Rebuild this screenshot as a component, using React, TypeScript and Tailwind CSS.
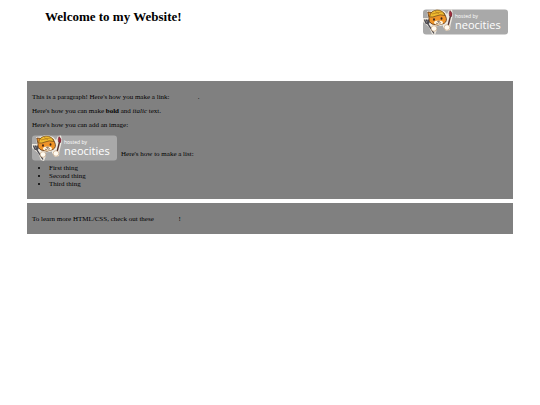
import React from "react";

type BadgeProps = {
  className?: string;
};

const items: string[] = ["First thing", "Second thing", "Third thing"];

const NeocitiesBadge = ({ className = "" }: BadgeProps) => (
  <svg
    viewBox="0 0 85 26"
    role="img"
    aria-label="Hosted by Neocities"
    className={`h-[26px] w-[85px] ${className}`}
  >
    <rect x="0" y="0.5" width="85" height="25" rx="3" fill="#a9a9a9" />
    {/* white outline behind the cat */}
    <path
      d="M4 2 L10 1.2 Q15 -1 21 2 L24 5 L26 1 L29 0.5 L30 6 L27.5 16 L27 21 L23 22 L20 18 L20 16.5 L13 17.5 L13.5 22 L12 26 L9 25 L6 18 L0 13 L0 9 L5 9 Z"
      fill="#f0ebe2"
    />
    {/* ears and head */}
    <path
      d="M6 9 L4.8 3 L9 3.5 Q15 0.5 21 4 L22.5 7 Q25 12 21 14.5 Q15 17.5 9 15 Q5 13 6 9 Z"
      fill="#ef9428"
      stroke="#5a3518"
      strokeWidth="0.8"
    />
    {/* helmet */}
    <path
      d="M6.5 8 Q7.5 1.5 14 1 Q20 1 22 6.5 Q17 5 13 7 Q10 8.5 6.5 8 Z"
      fill="#efbc30"
      stroke="#7a531c"
      strokeWidth="0.8"
    />
    <path d="M9 5 L19 2.8 M12 2.6 L16 4.6" stroke="#a56b1a" strokeWidth="0.6" />
    <ellipse cx="15.5" cy="13.6" rx="4.5" ry="2.2" fill="#fff4df" />
    <ellipse cx="11" cy="10.5" rx="0.9" ry="1.2" fill="#3a241b" />
    <ellipse cx="18.5" cy="9.5" rx="0.9" ry="1.2" fill="#3a241b" />
    <path
      d="M14.5 12.2 L16.5 12 L15.5 13.2 Z M13 14.2 Q14.5 15 15.5 13.8 Q17 14.6 18 13.6"
      fill="none"
      stroke="#4a3020"
      strokeWidth="0.6"
    />
    {/* fork */}
    <path
      d="M1.5 10.5 L2.8 14 Q4.5 15.5 6 13.5 L5 10.5 M3.3 10.5 L5 15 L11 24.5"
      fill="none"
      stroke="#4b4a50"
      strokeWidth="1.4"
    />
    {/* brush */}
    <path d="M27.5 7 L25 17" stroke="#54302f" strokeWidth="1.4" />
    <path
      d="M27 1.5 Q30 4 28.7 7.5 L26.5 7 Q25.5 4 27 1.5 Z"
      fill="#a32c3c"
      stroke="#572332"
      strokeWidth="0.5"
    />
    {/* paws */}
    <circle cx="11" cy="19.5" r="2.8" fill="#fffaf0" stroke="#b5885c" strokeWidth="0.5" />
    <circle cx="24" cy="18.5" r="2.8" fill="#fffaf0" stroke="#b5885c" strokeWidth="0.5" />
    <text
      x="32"
      y="9"
      fill="#ffffff"
      fontSize="5"
      className="font-['Open_Sans',sans-serif]"
    >
      hosted by
    </text>
    <text
      x="32"
      y="20"
      fill="#ffffff"
      fontSize="11"
      className="font-['Open_Sans',sans-serif]"
    >
      neocities
    </text>
  </svg>
);

const App = () => {
  return (
    <div className="bg-white px-[5%] font-['Liberation_Serif',serif] text-[7px] leading-2 text-black">
      <header className="flex items-start justify-between pt-[9px] pr-[5px] pb-[46px] pl-[18px]">
        <h1 className="text-[13px] leading-4 font-bold">
          Welcome to my Website!
        </h1>
        <a href="https://neocities.org">
          <NeocitiesBadge className="block" />
        </a>
      </header>

      <main className="flex flex-col gap-1">
        <section className="bg-[#808080] px-[5px] pt-3 pb-[11px]">
          <div className="flex flex-col gap-[6px]">
            <p>
              This is a paragraph! Here's how you make a link:{" "}
              <a href="https://neocities.org" className="text-[#808080]">
                Neocities
              </a>
              .
            </p>
            <p>
              Here's how you can make <strong>bold</strong> and <em>italic</em>{" "}
              text.
            </p>
            <p>Here's how you can add an image:</p>
            <div className="flex items-end gap-1">
              <NeocitiesBadge />
              <p className="pb-[3px]">Here's how to make a list:</p>
            </div>
          </div>
          <ul className="mt-[3px] list-disc pl-[17px]">
            {items.map((item) => (
              <li key={item}>{item}</li>
            ))}
          </ul>
        </section>

        <section className="bg-[#808080] px-[5px] pt-3 pb-[11px]">
          <p>
            To learn more HTML/CSS, check out these{" "}
            <a
              href="https://neocities.org/tutorials"
              className="text-[#808080]"
            >
              tutorials
            </a>
            !
          </p>
        </section>
      </main>
    </div>
  );
};

export default App;
